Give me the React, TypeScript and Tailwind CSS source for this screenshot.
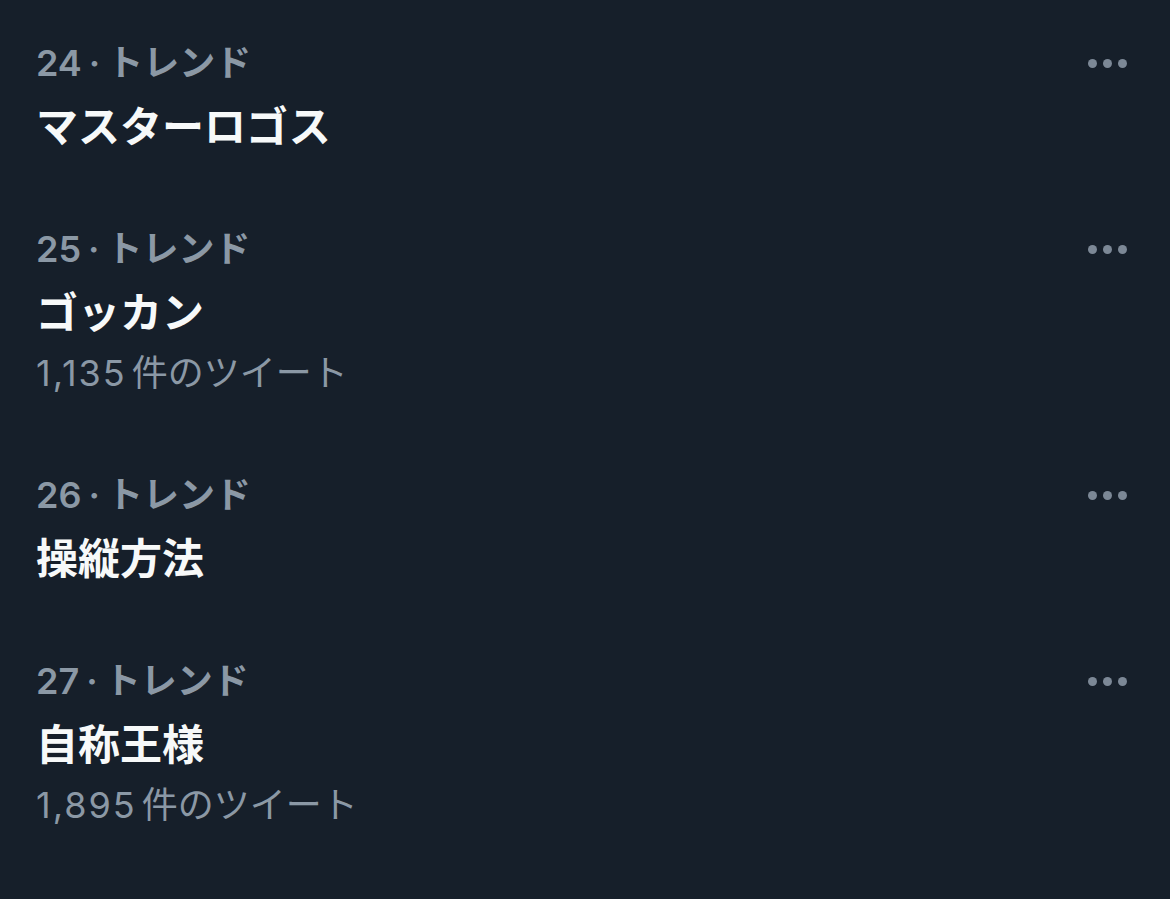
import React from "react";

type Trend = { rank: number; title: string; count?: string };

const trends: Trend[] = [
  { rank: 24, title: "マスターロゴス" },
  { rank: 25, title: "ゴッカン", count: "1,135" },
  { rank: 26, title: "操縦方法" },
  { rank: 27, title: "自称王様", count: "1,895" },
];

const font = { fontFamily: '"Inter", "Noto Sans CJK JP", sans-serif' };

function Dots() {
  return (
    <div className="flex items-center gap-[6px] h-[68px]">
      <span className="w-[9px] h-[9px] rounded-full bg-[#7c8896]" />
      <span className="w-[9px] h-[9px] rounded-full bg-[#7c8896]" />
      <span className="w-[9px] h-[9px] rounded-full bg-[#7c8896]" />
    </div>
  );
}

function TrendItem({ t }: { t: Trend }) {
  return (
    <div className="flex justify-between pl-[36px] pr-[43px] py-[29px]">
      <div className="flex flex-col">
        <div className="flex items-center h-[68px] text-[36px] font-semibold text-[#8b98a5] leading-none">
          <span>{t.rank}</span>
          <span className="mx-[7px]">·</span>
          <span>トレンド</span>
        </div>
        <div className="flex items-center h-[60px] text-[42px] font-bold text-[#f7f9f9] leading-none">
          {t.title}
        </div>
        {t.count && (
          <div className="flex items-center h-[60px] text-[36px] font-normal text-[#8b98a5] leading-none">
            <span className="tracking-[2px]">{t.count}</span>
            <span className="ml-[5px]">件のツイート</span>
          </div>
        )}
      </div>
      <Dots />
    </div>
  );
}

export default function App() {
  return (
    <div className="w-[1170px] h-[899px] bg-[#161f2a] overflow-hidden" style={font}>
      {trends.map((t) => (
        <TrendItem key={t.rank} t={t} />
      ))}
    </div>
  );
}
